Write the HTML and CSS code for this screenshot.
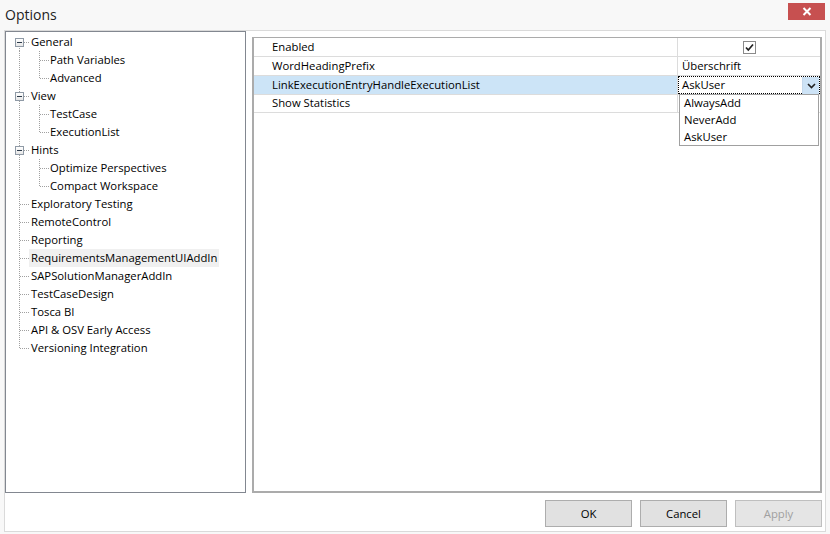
FILE: index.html
```html
<!DOCTYPE html>
<html lang="en">
<head>
  <meta charset="UTF-8" />
  <title>Options</title>
  <link rel="stylesheet" href="styles.css">
</head>
<body>
  <div class="window">
    <div class="titlebar">
      <span class="title">Options</span>
      <button class="close" aria-label="Close">
        <svg width="10" height="9" viewBox="0 0 10 9"><path d="M1.5 1 L8.5 8 M8.5 1 L1.5 8" stroke="#fff" stroke-width="2"/></svg>
      </button>
    </div>

    <div class="content">
      <div class="panes">
        <div class="tree">
          <div class="node"><span class="seg down"><span class="box"></span></span><span class="label">General</span></div>
          <div class="node"><span class="seg pipe"></span><span class="seg2 tee"></span><span class="label">Path Variables</span></div>
          <div class="node"><span class="seg pipe"></span><span class="seg2 ell"></span><span class="label">Advanced</span></div>
          <div class="node"><span class="seg tee"><span class="box"></span></span><span class="label">View</span></div>
          <div class="node"><span class="seg pipe"></span><span class="seg2 tee"></span><span class="label">TestCase</span></div>
          <div class="node"><span class="seg pipe"></span><span class="seg2 ell"></span><span class="label">ExecutionList</span></div>
          <div class="node"><span class="seg tee"><span class="box"></span></span><span class="label">Hints</span></div>
          <div class="node"><span class="seg pipe"></span><span class="seg2 tee"></span><span class="label">Optimize Perspectives</span></div>
          <div class="node"><span class="seg pipe"></span><span class="seg2 ell"></span><span class="label">Compact Workspace</span></div>
          <div class="node"><span class="seg tee"></span><span class="label">Exploratory Testing</span></div>
          <div class="node"><span class="seg tee"></span><span class="label">RemoteControl</span></div>
          <div class="node"><span class="seg tee"></span><span class="label">Reporting</span></div>
          <div class="node"><span class="seg tee"></span><span class="label selected">RequirementsManagementUIAddIn</span></div>
          <div class="node"><span class="seg tee"></span><span class="label">SAPSolutionManagerAddIn</span></div>
          <div class="node"><span class="seg tee"></span><span class="label">TestCaseDesign</span></div>
          <div class="node"><span class="seg tee"></span><span class="label">Tosca BI</span></div>
          <div class="node"><span class="seg tee"></span><span class="label">API &amp; OSV Early Access</span></div>
          <div class="node"><span class="seg ell"></span><span class="label">Versioning Integration</span></div>
        </div>

        <div class="props">
          <div class="prop-row">
            <div class="name">Enabled</div>
            <div class="value center">
              <span class="check">
                <svg width="11" height="11" viewBox="0 0 11 11"><path d="M2 5.5 L4.3 8 L9 2.5" fill="none" stroke="#222" stroke-width="1.7"/></svg>
              </span>
            </div>
          </div>
          <div class="prop-row">
            <div class="name">WordHeadingPrefix</div>
            <div class="value">Überschrift</div>
          </div>
          <div class="prop-row active">
            <div class="name">LinkExecutionEntryHandleExecutionList</div>
            <div class="value editing">
              <span class="combo-text">AskUser</span>
              <span class="combo-btn">
                <svg width="9" height="6" viewBox="0 0 9 6"><path d="M1 1 L4.5 4.5 L8 1" fill="none" stroke="#222" stroke-width="1.6"/></svg>
              </span>
              <ul class="dropdown">
                <li>AlwaysAdd</li>
                <li>NeverAdd</li>
                <li>AskUser</li>
              </ul>
            </div>
          </div>
          <div class="prop-row last">
            <div class="name">Show Statistics</div>
            <div class="value"></div>
          </div>
        </div>
      </div>

      <div class="buttons">
        <button class="btn">OK</button>
        <button class="btn">Cancel</button>
        <button class="btn disabled">Apply</button>
      </div>
    </div>
  </div>
</body>
</html>
```

FILE: styles.css
```css
body {
  margin: 0;
  background: #f8f8f8;
  font-family: "Segoe UI", "Open Sans", sans-serif;
  font-size: 11.3px;
  color: #000;
}
.window {
  width: 830px;
  height: 534px;
}
.titlebar {
  height: 30px;
  display: flex;
  align-items: center;
  justify-content: space-between;
  padding: 0 5px 0 5px;
  box-sizing: border-box;
}
.title {
  font-size: 14px;
  color: #222;
  margin-top: -1px;
}
.close {
  width: 37px;
  height: 17px;
  margin-top: -8px;
  border: none;
  background: #c75050;
  display: flex;
  align-items: center;
  justify-content: center;
  padding: 0;
}
.content {
  margin: 0 4px;
  height: 502px;
  box-sizing: border-box;
  border: 1px solid #dadada;
  background: #fff;
  padding: 0 3px 0 0;
}
.panes {
  display: flex;
  height: 461px;
}

/* tree */
.tree {
  width: 241px;
  height: 462px;
  box-sizing: border-box;
  border: 1px solid #828790;
  padding-top: 1px;
}
.node {
  display: flex;
  height: 18px;
  line-height: 18px;
}
.seg, .seg2 {
  display: flex;
  align-items: center;
  height: 18px;
  flex: none;
  background-repeat: no-repeat;
}
.seg { width: 25px; }
.seg2 { width: 19px; }
.seg.tee {
  background-image:
    repeating-linear-gradient(to bottom, #a0a0a0 0 1px, transparent 1px 2px),
    repeating-linear-gradient(to right, #a0a0a0 0 1px, transparent 1px 2px);
  background-size: 1px 18px, 10px 1px;
  background-position: 13px 0, 14px 9px;
}
.seg.down {
  background-image:
    repeating-linear-gradient(to bottom, #a0a0a0 0 1px, transparent 1px 2px),
    repeating-linear-gradient(to right, #a0a0a0 0 1px, transparent 1px 2px);
  background-size: 1px 9px, 10px 1px;
  background-position: 13px 9px, 14px 9px;
}
.seg.ell {
  background-image:
    repeating-linear-gradient(to bottom, #a0a0a0 0 1px, transparent 1px 2px),
    repeating-linear-gradient(to right, #a0a0a0 0 1px, transparent 1px 2px);
  background-size: 1px 10px, 10px 1px;
  background-position: 13px 0, 14px 9px;
}
.seg.pipe {
  background-image: repeating-linear-gradient(to bottom, #a0a0a0 0 1px, transparent 1px 2px);
  background-size: 1px 18px;
  background-position: 13px 0;
}
.seg2.tee {
  background-image:
    repeating-linear-gradient(to bottom, #a0a0a0 0 1px, transparent 1px 2px),
    repeating-linear-gradient(to right, #a0a0a0 0 1px, transparent 1px 2px);
  background-size: 1px 18px, 9px 1px;
  background-position: 8px 0, 9px 9px;
}
.seg2.ell {
  background-image:
    repeating-linear-gradient(to bottom, #a0a0a0 0 1px, transparent 1px 2px),
    repeating-linear-gradient(to right, #a0a0a0 0 1px, transparent 1px 2px);
  background-size: 1px 10px, 9px 1px;
  background-position: 8px 0, 9px 9px;
}
.box {
  width: 9px;
  height: 9px;
  box-sizing: border-box;
  margin-left: 9px;
  border: 1px solid #8f9aa6;
  background: linear-gradient(#ffffff, #e6e6e6);
  display: flex;
  align-items: center;
  justify-content: center;
}
.box::before {
  content: "";
  width: 5px;
  height: 1px;
  background: #2b3a4a;
}
.label {
  padding: 0 2px;
  margin-left: -2px;
  white-space: nowrap;
}
.label.selected {
  background: #f0f0f0;
}

/* property grid */
.props {
  width: 570px;
  height: 456px;
  margin: 6px 0 0 6px;
  box-sizing: border-box;
  border: 2px solid #ababab;
  border-top-width: 1px;
}
.prop-row {
  display: flex;
  height: 19px;
  box-sizing: border-box;
  border-bottom: 1px solid #dcdcdc;
  line-height: 17px;
}
.prop-row.last {
  height: 18px;
  line-height: 16px;
}
.prop-row .name {
  width: 424px;
  box-sizing: border-box;
  padding-left: 18px;
  border-right: 1px solid #dcdcdc;
  white-space: nowrap;
}
.prop-row .value {
  flex: 1;
  padding-left: 4px;
  display: flex;
  align-items: flex-start;
}
.prop-row .value.center {
  justify-content: center;
  align-items: center;
  padding-left: 0;
}
.prop-row.active .name {
  background: #cce4f7;
}
.check {
  width: 13px;
  height: 13px;
  box-sizing: border-box;
  border: 1px solid #8a8a8a;
  display: flex;
  align-items: center;
  justify-content: center;
  margin-left: 1px;
}
.value.editing {
  position: relative;
  border: 1px dotted #000;
  padding-left: 3px;
  background: #fff;
  line-height: 16px;
}
.combo-text {
  flex: 1;
}
.combo-btn {
  width: 16px;
  height: 17px;
  background: #cde3f6;
  border-left: 1px solid #c4d8ec;
  display: flex;
  align-items: center;
  justify-content: center;
}
.dropdown {
  position: absolute;
  left: 0;
  top: 17px;
  width: 140px;
  height: 52px;
  box-sizing: border-box;
  margin: 0;
  padding: 0 0 0 4px;
  list-style: none;
  background: #fff;
  border: 1px solid #a0a0a0;
  line-height: 17px;
}
.dropdown li:first-child {
  margin-top: -1px;
}

/* buttons */
.buttons {
  display: flex;
  justify-content: flex-end;
  gap: 8px;
  margin-top: 8px;
}
.btn {
  width: 87px;
  height: 27px;
  border: 1px solid #adadad;
  background: #e1e1e1;
  font-family: inherit;
  font-size: 11.3px;
  color: #000;
  padding: 0;
}
.btn.disabled {
  color: #a0a0a0;
  border-color: #bfbfbf;
  background: #e5e5e5;
}
```
